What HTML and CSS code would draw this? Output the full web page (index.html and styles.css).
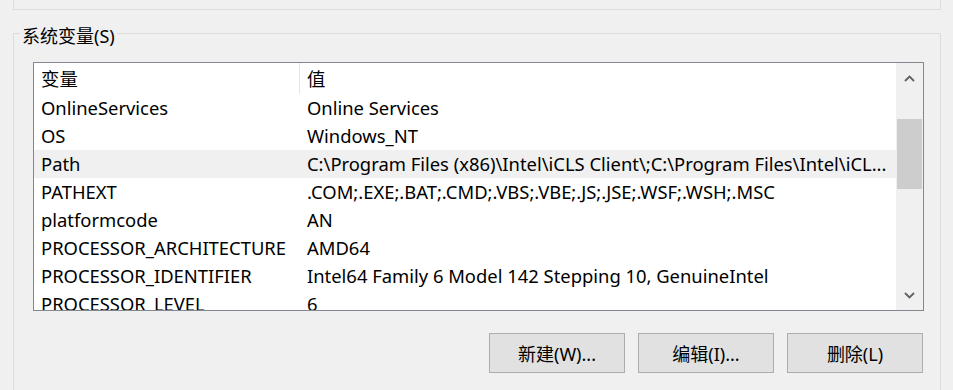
FILE: index.html
```html
<!DOCTYPE html>
<html lang="zh-CN">
<head>
  <meta charset="UTF-8">
  <title>环境变量</title>
  <link rel="stylesheet" href="styles.css">
</head>
<body>
<!-- bottom of the user variables group -->
<div class="prev-group"></div>

<fieldset class="group">
  <legend>系统变量(S)</legend>

  <div class="list">
    <div class="list-body">
      <div class="row head">
        <span class="name">变量</span>
        <span class="value">值</span>
      </div>
      <div class="row"><span class="name">OnlineServices</span><span class="value">Online Services</span></div>
      <div class="row"><span class="name">OS</span><span class="value">Windows_NT</span></div>
      <div class="row hot"><span class="name">Path</span><span class="value">C:\Program Files (x86)\Intel\iCLS Client\;C:\Program Files\Intel\iCL...</span></div>
      <div class="row"><span class="name">PATHEXT</span><span class="value">.COM;.EXE;.BAT;.CMD;.VBS;.VBE;.JS;.JSE;.WSF;.WSH;.MSC</span></div>
      <div class="row"><span class="name">platformcode</span><span class="value">AN</span></div>
      <div class="row"><span class="name">PROCESSOR_ARCHITECTURE</span><span class="value">AMD64</span></div>
      <div class="row"><span class="name">PROCESSOR_IDENTIFIER</span><span class="value">Intel64 Family 6 Model 142 Stepping 10, GenuineIntel</span></div>
      <div class="row"><span class="name">PROCESSOR_LEVEL</span><span class="value">6</span></div>
    </div>

    <div class="scrollbar">
      <div class="arrow">
        <svg width="11" height="7" viewBox="0 0 11 7"><path d="M1 6 L5.5 1.5 L10 6" fill="none" stroke="#606060" stroke-width="1.8"/></svg>
      </div>
      <div class="track"><div class="thumb"></div></div>
      <div class="arrow">
        <svg width="11" height="7" viewBox="0 0 11 7"><path d="M1 1 L5.5 5.5 L10 1" fill="none" stroke="#606060" stroke-width="1.8"/></svg>
      </div>
    </div>
  </div>

  <div class="buttons">
    <button class="btn" type="button">新建(W)...</button>
    <button class="btn" type="button">编辑(I)...</button>
    <button class="btn" type="button">删除(L)</button>
  </div>
</fieldset>
</body>
</html>
```

FILE: styles.css
```css
body{
  margin: 0;
  background-color: #f0f0f0;
  font-family: "Noto Sans", "Noto Sans CJK SC", sans-serif;
  font-size: 18px;
  color: #000;
  overflow: hidden;
}

.prev-group{
  height: 9px;
  margin: 0 12px 0 13px;
  border: 1px solid #dcdcdc;
  border-top: none;
}

/* system variables group box */
.group{
  margin: 9px 12px 0 13px;
  padding: 0 0 40px 0;
  border: 1px solid #dcdcdc;
  min-width: 0;
}

.group legend{
  margin-left: 6px;
  padding: 5px 2px 0 2px;
  line-height: 24px;
}

.list{
  display: flex;
  height: 247px;
  margin: 14px 16px 0 19px;
  border: 1px solid #828790;
  background-color: #fff;
  font-size: 18.4px;
}

.list-body{
  flex: 1;
  min-width: 0;
  overflow: hidden;
}

.row{
  display: flex;
  height: 28px;
  line-height: 28px;
  white-space: nowrap;
}

.row.head{
  height: 31px;
  line-height: 31px;
}

.row.hot{
  background-color: #f0f0f0;
}

.name{
  width: 259px;
  padding-left: 7px;
  flex-shrink: 0;
}

.head .name{
  width: 258px;
  border-right: 1px solid #e5e5e5;
}

.value{
  flex: 1;
  min-width: 0;
  padding: 0 4px 0 7px;
  overflow: hidden;
  text-overflow: ellipsis;
}

/* vertical scrollbar */
.scrollbar{
  width: 27px;
  display: flex;
  flex-direction: column;
  background-color: #f0f0f0;
}

.arrow{
  height: 30px;
  display: flex;
  align-items: center;
  justify-content: center;
}

.track{
  flex: 1;
  padding: 26px 1px 0 1px;
}

.thumb{
  height: 70px;
  background-color: #cdcdcd;
}

.buttons{
  display: flex;
  justify-content: flex-end;
  gap: 13px;
  margin: 22px 17px 0 0;
}

.btn{
  width: 136px;
  height: 40px;
  padding: 0;
  background-color: #e1e1e1;
  border: 1px solid #adadad;
  border-radius: 0;
  font-family: "Noto Sans", "Noto Sans CJK SC", sans-serif;
  font-size: 18px;
  color: #000;
}
```
